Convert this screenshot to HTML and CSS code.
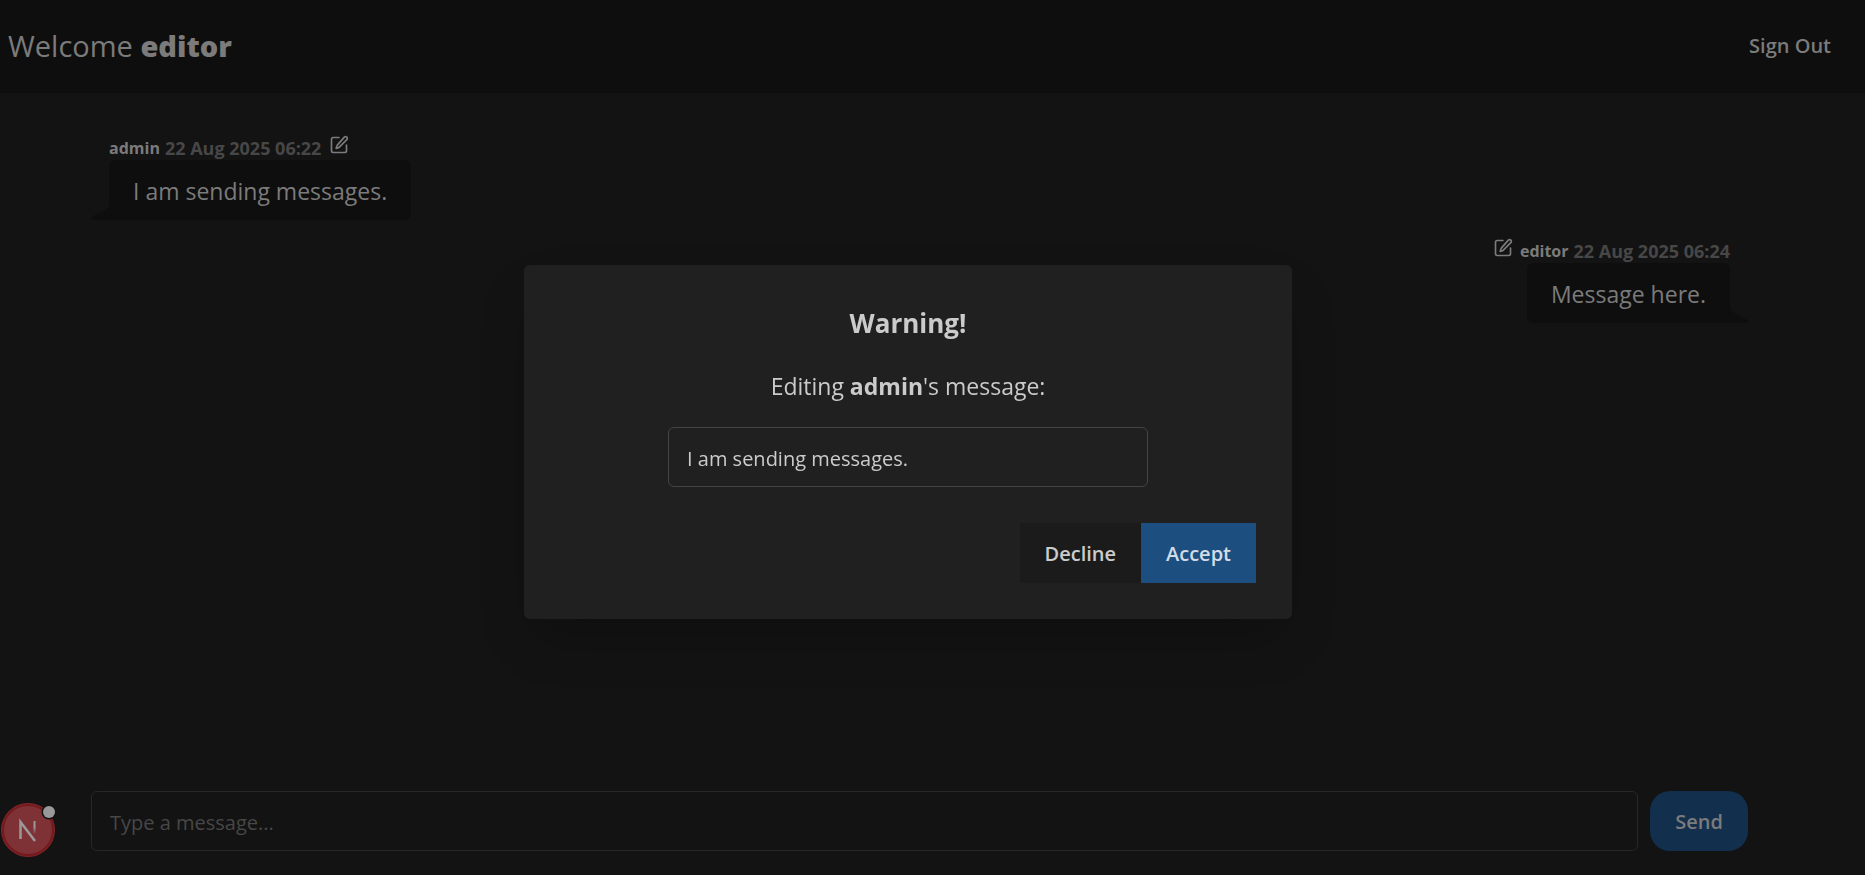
FILE: index.html
```html
<!DOCTYPE html>
<html lang="en">
<head>
<meta charset="utf-8">
<title>Chat</title>
<link rel="stylesheet" href="styles.css">
</head>
<body>
<div class="app">
  <header class="navbar">
    <h1 class="welcome">Welcome <strong>editor</strong></h1>
    <button class="sign-out" type="button">Sign Out</button>
  </header>
  <main class="chat">
    <article class="message message-start">
      <div class="message-head">
        <span class="author">admin</span>
        <time class="stamp" datetime="2025-08-22T06:22">22 Aug 2025 06:22</time>
        <button class="edit" type="button" aria-label="Edit message">
          <svg viewBox="0 0 24 24"><path d="M12 3H5a2 2 0 0 0-2 2v14a2 2 0 0 0 2 2h14a2 2 0 0 0 2-2v-7"/><path d="M18.4 2.6a2.1 2.1 0 0 1 3 3l-9 9a2 2 0 0 1-.9.5l-2.9.9.9-2.9a2 2 0 0 1 .5-.9z"/></svg>
        </button>
      </div>
      <p class="bubble">I am sending messages.<svg class="tail" viewBox="0 0 18 14"><path d="M18 0v14H1.500a1.500 1.500 0 0 1-.8-2.700C7 7 16 4 18 0z"/></svg></p>
    </article>
    <article class="message message-end">
      <div class="message-head">
        <button class="edit" type="button" aria-label="Edit message">
          <svg viewBox="0 0 24 24"><path d="M12 3H5a2 2 0 0 0-2 2v14a2 2 0 0 0 2 2h14a2 2 0 0 0 2-2v-7"/><path d="M18.4 2.6a2.1 2.1 0 0 1 3 3l-9 9a2 2 0 0 1-.9.5l-2.9.9.9-2.9a2 2 0 0 1 .5-.9z"/></svg>
        </button>
        <span class="author">editor</span>
        <time class="stamp" datetime="2025-08-22T06:24">22 Aug 2025 06:24</time>
      </div>
      <p class="bubble">Message here.<svg class="tail" viewBox="0 0 18 14"><path d="M18 0v14H1.500a1.500 1.500 0 0 1-.8-2.700C7 7 16 4 18 0z"/></svg></p>
    </article>
  </main>
  <form class="composer">
    <input class="field composer-field" type="text" placeholder="Type a message..." aria-label="Message">
    <button class="send" type="button">Send</button>
  </form>
</div>

<button class="dev-badge" type="button" aria-label="Developer tools">
  <svg viewBox="0 0 56 58">
    <defs><linearGradient id="fade" x1="0" y1="0" x2="0" y2="1"><stop offset="0.5" stop-color="#999"/><stop offset="1" stop-color="#999" stop-opacity="0"/></linearGradient></defs>
    <circle cx="28" cy="30" r="27" fill="#86262b"/>
    <circle cx="28" cy="30" r="25" fill="#7f3236" stroke="#741a1e" stroke-width="2"/>
    <path d="M20.500 39V22L35 41" fill="none" stroke="#999" stroke-width="2.500"/>
    <path d="M33.500 21h2v13h-2z" fill="url(#fade)"/>
    <circle cx="49" cy="12" r="7.500" fill="#131313"/>
    <circle cx="49" cy="12" r="6" fill="#999"/>
  </svg>
</button>

<div class="overlay">
  <section class="dialog" role="dialog" aria-modal="true" aria-labelledby="dialog-title">
    <h2 class="dialog-title" id="dialog-title">Warning!</h2>
    <label class="dialog-text" for="edit-text">Editing <strong>admin</strong>'s message:</label>
    <input class="field dialog-field" id="edit-text" type="text" value="I am sending messages.">
    <div class="actions">
      <button class="action decline" type="button">Decline</button>
      <button class="action accept" type="button">Accept</button>
    </div>
  </section>
</div>
</body>
</html>
```
FILE: styles.css
```css
* { box-sizing: border-box; margin: 0; }
body {
  background: #131313;
  color: #7b7b7b;
  font: 20px/30px "Segoe UI", "Open Sans", "Noto Sans", sans-serif;
}
button, input { font: inherit; color: inherit; }
button { border: 0; padding: 0; background: none; }

.app { min-height: 100vh; display: flex; flex-direction: column; }
.navbar {
  display: flex;
  align-items: center;
  justify-content: space-between;
  min-height: 93px;
  padding: 0 34px 2px 8px;
  background: #0e0e0e;
}
.welcome { font-size: 29px; line-height: 40px; font-weight: 500; }
.welcome strong { font-weight: 800; }
.sign-out, .send, .action { font-weight: 600; }

.chat { flex: 1; padding: 40px 135px 0 109px; }
.message { display: flex; flex-direction: column; margin-bottom: 16px; }
.message-start { align-items: flex-start; }
.message-end { align-items: flex-end; }
.message-head {
  display: flex;
  align-items: flex-end;
  gap: 5px;
  height: 27px;
  font-size: 18px;
  line-height: 24px;
  font-weight: 700;
}
.author { font-size: 16px; }
.stamp { color: #474747; }
.edit { width: 20px; height: 20px; margin: 0 2px 5px 3px; }
.edit svg { display: block; fill: none; stroke: #7b7b7b; stroke-width: 2; stroke-linecap: round; stroke-linejoin: round; }
.bubble {
  position: relative;
  padding: 16px 24px 14px;
  border-radius: 6px;
  background: #0e0e0e;
  font-size: 23px;
}
.tail { position: absolute; bottom: 0; left: -18px; width: 18px; height: 14px; fill: #0e0e0e; }
.message-end .tail { left: auto; right: -18px; transform: scaleX(-1); }
.message-start .bubble { border-bottom-left-radius: 0; }
.message-end .bubble { border-bottom-right-radius: 0; }

.composer { display: flex; gap: 12px; padding: 0 117px 24px 91px; }
.field {
  height: 60px;
  padding: 2px 18px 0;
  border: 1px solid #272727;
  border-radius: 6px;
  background: transparent;
  outline: 0;
}
.composer-field { flex: 1; min-width: 0; }
.composer-field::placeholder { color: #474747; opacity: 1; }
.send { padding: 2px 25px 0; border-radius: 20px; background: #122f4e; }

.dev-badge { position: fixed; left: 0; bottom: 17px; width: 56px; height: 58px; }
.dev-badge svg { display: block; }

.overlay {
  position: fixed;
  inset: 0;
  display: grid;
  place-items: center;
  padding: 9px 49px 0 0;
}
.dialog {
  display: flex;
  flex-direction: column;
  align-items: center;
  width: 100%;
  max-width: 768px;
  padding: 36px;
  border-radius: 6px;
  background: #202020;
  box-shadow: 0 25px 50px -12px rgba(0, 0, 0, 0.25);
  color: #cbcbcb;
}
.dialog-title { font-size: 26px; line-height: 44px; font-weight: 700; }
.dialog-text { margin: 24px 0; font-size: 23px; line-height: 34px; }
.dialog-field { width: 480px; max-width: 100%; border-color: #444; }
.actions { display: flex; align-self: flex-end; margin-top: 36px; }
.action { height: 60px; padding: 2px 25px 0; }
.decline { background: #1b1b1b; }
.accept { background: #1c4e80; color: #d2dce6; }
```
